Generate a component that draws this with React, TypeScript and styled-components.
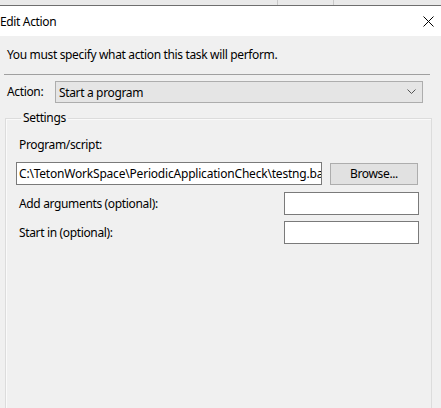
import React from 'react';
import styled, { createGlobalStyle } from 'styled-components';

const GlobalStyle = createGlobalStyle`
  html, body {
    margin: 0;
    padding: 0;
    background: #f0f0f0;
  }
  body {
    font-family: "Noto Sans", "Liberation Sans", sans-serif;
    font-size: 12px;
    letter-spacing: -0.35px;
    color: #000;
  }
`;

const Window = styled.div`
  width: 441px;
  height: 408px;
  overflow: hidden;
  display: flex;
  flex-direction: column;
  background: #f0f0f0;
`;

const TopStrip = styled.div`
  flex-shrink: 0;
  height: 5px;
  display: flex;
  background: #e9e9e9;
  border-bottom: 1px solid #6e6e6e;
`;

const StripCell = styled.div<{ $w: number }>`
  width: ${(p) => p.$w}px;
  border-right: 1px solid #c8c8c8;
`;

const TitleBar = styled.div`
  flex-shrink: 0;
  height: 30px;
  display: flex;
  align-items: center;
  justify-content: space-between;
  background: #fff;
`;

const Title = styled.div`
  padding-top: 1px;
  line-height: 16px;
`;

const CloseIcon = styled.svg`
  width: 11px;
  height: 11px;
  margin-right: 7px;
  margin-top: 1px;
`;

const Body = styled.div`
  flex: 1;
  min-height: 0;
  overflow: hidden;
  display: flex;
  flex-direction: column;
  padding: 11px 0 0;
`;

const Instruction = styled.div`
  padding-left: 7px;
  line-height: 16px;
`;

const Divider = styled.div`
  flex-shrink: 0;
  height: 1px;
  margin: 11px 11px 0 4px;
  background: #a0a0a0;
`;

const ActionRow = styled.div`
  flex-shrink: 0;
  display: flex;
  align-items: center;
  margin-top: 6px;
  padding-left: 7px;
`;

const Label = styled.div`
  line-height: 16px;
`;

const ActionLabel = styled(Label)`
  width: 48px;
`;

const Combo = styled.div`
  width: 368px;
  height: 22px;
  box-sizing: border-box;
  display: flex;
  align-items: center;
  justify-content: space-between;
  padding: 0 6px 0 3px;
  background: #e5e5e5;
  border: 1px solid #adadad;
`;

const Chevron = styled.svg`
  width: 9px;
  height: 6px;
`;

const Group = styled.fieldset`
  flex-shrink: 0;
  margin: 7px 9px 0 5px;
  padding: 11px 12px 0 10px;
  height: 400px;
  border: 1px solid #dcdcdc;
  box-shadow: inset 1px 1px 0 #fafafa;
  min-inline-size: 0;
`;

const Legend = styled.legend`
  margin-left: 5px;
  padding: 0 2px;
  line-height: 16px;
`;

const FieldLabel = styled(Label)`
  padding-left: 3px;
`;

const PathRow = styled.div`
  display: flex;
  align-items: center;
  gap: 8px;
  margin-top: 9px;
`;

const TextBox = styled.div<{ $w: number }>`
  width: ${(p) => p.$w}px;
  height: 23px;
  box-sizing: border-box;
  background: #fff;
  border: 1px solid #7a7a7a;
  padding: 0 2px;
  line-height: 21px;
  letter-spacing: -0.2px;
  white-space: nowrap;
  overflow: hidden;
`;

const Button = styled.div`
  width: 88px;
  height: 22px;
  box-sizing: border-box;
  display: flex;
  align-items: center;
  justify-content: center;
  background: #e1e1e1;
  border: 1px solid #adadad;
`;

const OptionRow = styled.div<{ $top: number }>`
  display: flex;
  align-items: center;
  justify-content: space-between;
  margin-top: ${(p) => p.$top}px;
`;

export default function App() {
  return (
    <>
      <GlobalStyle />
      <Window>
        <TopStrip>
          <StripCell $w={277} />
          <StripCell $w={55} />
        </TopStrip>
        <TitleBar>
          <Title>Edit Action</Title>
          <CloseIcon viewBox="0 0 11 11">
            <path d="M0.5 0.5 L10.5 10.5 M10.5 0.5 L0.5 10.5" stroke="#000" strokeWidth="1" fill="none" />
          </CloseIcon>
        </TitleBar>
        <Body>
          <Instruction>You must specify what action this task will perform.</Instruction>
          <Divider />
          <ActionRow>
            <ActionLabel>Action:</ActionLabel>
            <Combo>
              <span>Start a program</span>
              <Chevron viewBox="0 0 9 6">
                <path d="M0.5 0.5 L4.5 4.5 L8.5 0.5" stroke="#555" strokeWidth="1" fill="none" />
              </Chevron>
            </Combo>
          </ActionRow>
          <Group>
            <Legend>Settings</Legend>
            <FieldLabel>Program/script:</FieldLabel>
            <PathRow>
              <TextBox $w={306}>C:\TetonWorkSpace\PeriodicApplicationCheck\testng.bat</TextBox>
              <Button>Browse...</Button>
            </PathRow>
            <OptionRow $top={7}>
              <FieldLabel>Add arguments (optional):</FieldLabel>
              <TextBox $w={135} />
            </OptionRow>
            <OptionRow $top={6}>
              <FieldLabel>Start in (optional):</FieldLabel>
              <TextBox $w={135} />
            </OptionRow>
          </Group>
        </Body>
      </Window>
    </>
  );
}
